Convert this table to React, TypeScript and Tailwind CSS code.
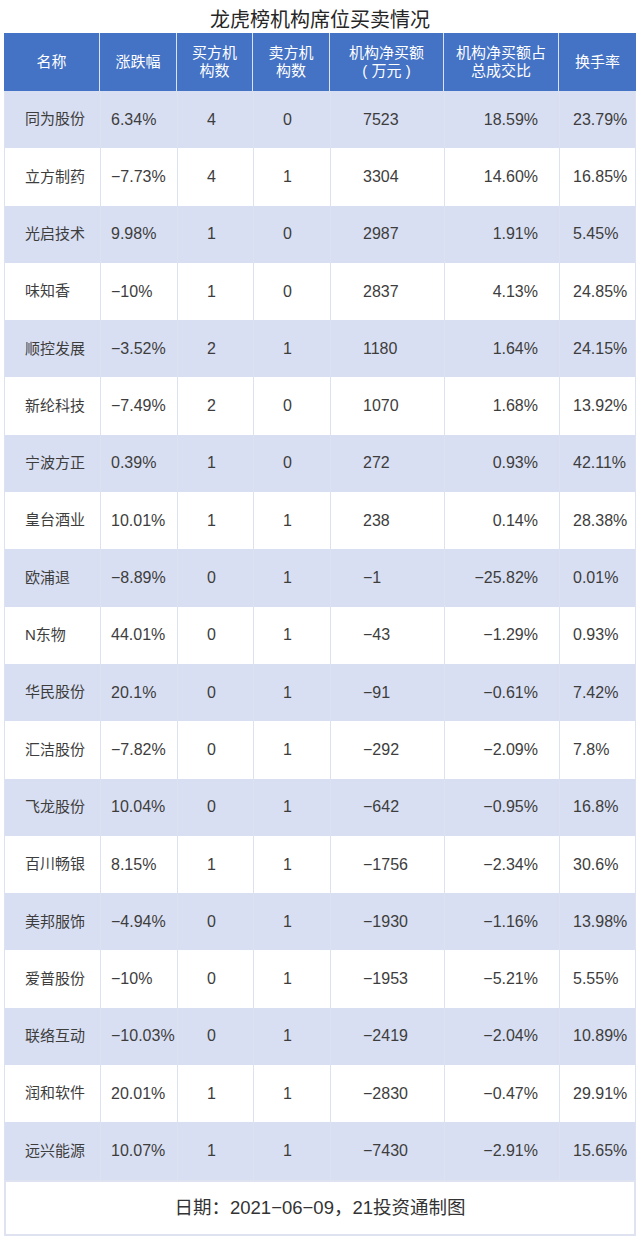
const rows: string[][] = [
  ["同为股份", "6.34%", "4", "0", "7523", "18.59%", "23.79%"],
  ["立方制药", "−7.73%", "4", "1", "3304", "14.60%", "16.85%"],
  ["光启技术", "9.98%", "1", "0", "2987", "1.91%", "5.45%"],
  ["味知香", "−10%", "1", "0", "2837", "4.13%", "24.85%"],
  ["顺控发展", "−3.52%", "2", "1", "1180", "1.64%", "24.15%"],
  ["新纶科技", "−7.49%", "2", "0", "1070", "1.68%", "13.92%"],
  ["宁波方正", "0.39%", "1", "0", "272", "0.93%", "42.11%"],
  ["皇台酒业", "10.01%", "1", "1", "238", "0.14%", "28.38%"],
  ["欧浦退", "−8.89%", "0", "1", "−1", "−25.82%", "0.01%"],
  ["N东物", "44.01%", "0", "1", "−43", "−1.29%", "0.93%"],
  ["华民股份", "20.1%", "0", "1", "−91", "−0.61%", "7.42%"],
  ["汇洁股份", "−7.82%", "0", "1", "−292", "−2.09%", "7.8%"],
  ["飞龙股份", "10.04%", "0", "1", "−642", "−0.95%", "16.8%"],
  ["百川畅银", "8.15%", "1", "1", "−1756", "−2.34%", "30.6%"],
  ["美邦服饰", "−4.94%", "0", "1", "−1930", "−1.16%", "13.98%"],
  ["爱普股份", "−10%", "0", "1", "−1953", "−5.21%", "5.55%"],
  ["联络互动", "−10.03%", "0", "1", "−2419", "−2.04%", "10.89%"],
  ["润和软件", "20.01%", "1", "1", "−2830", "−0.47%", "29.91%"],
  ["远兴能源", "10.07%", "1", "1", "−7430", "−2.91%", "15.65%"],
];

const headers = [
  ["名称"],
  ["涨跌幅"],
  ["买方机", "构数"],
  ["卖方机", "构数"],
  ["机构净买额", "( 万元 )"],
  ["机构净买额占", "总成交比"],
  ["换手率"],
];

// per-column alignment, measured off the picture
const cellAlign = [
  "justify-start pl-[20px] text-[15px]",
  "justify-start pl-[10px] text-[16px]",
  "justify-start pl-[29px] text-[16px]",
  "justify-start pl-[29px] text-[16px]",
  "justify-start pl-[32px] text-[16px]",
  "justify-end pr-[21px] text-[16px]",
  "justify-start pl-[13px] text-[16px]",
];

const grid = "grid grid-cols-[96px_77px_76px_77px_114px_115px_77px]";

export default function App() {
  return (
    <div
      lang="zh-CN"
      className="min-h-screen bg-white font-['Liberation_Sans','Noto_Sans_CJK_SC',sans-serif] text-[#3d3d3d]"
    >
      <div className="flex h-[33px] items-start justify-center pt-[10px] text-[20px] leading-[20px] text-[#262626]">
        龙虎榜机构席位买卖情况
      </div>

      <div className="ml-[4px] w-[632px]">
        <div className={`${grid} h-[58px] bg-[#4472c4] text-white`}>
          {headers.map((lines, i) => (
            <div
              key={i}
              className={`flex flex-col items-center justify-center text-[15px] leading-[18px] ${
                i < headers.length - 1 ? "border-r border-white/80" : ""
              }`}
            >
              {lines.map((line) => (
                <span key={line}>{line}</span>
              ))}
            </div>
          ))}
        </div>

        <div className="border-x border-[#dde2f1]">
          {rows.map((row, r) => (
            <div
              key={row[0]}
              className={`${grid} h-[57.3px] ${r % 2 === 0 ? "bg-[#d9dff2]" : "bg-white"}`}
            >
              {row.map((value, i) => (
                <div
                  key={i}
                  className={`flex items-center ${cellAlign[i]} ${
                    i < row.length - 1 ? "border-r border-[#dde2f1]" : ""
                  }`}
                >
                  {value}
                </div>
              ))}
            </div>
          ))}
        </div>

        <div className="flex h-[56px] items-center justify-center border-2 border-[#dfe2f0] text-[18.5px] text-[#333]">
          日期：2021−06−09，21投资通制图
        </div>
      </div>
    </div>
  );
}
